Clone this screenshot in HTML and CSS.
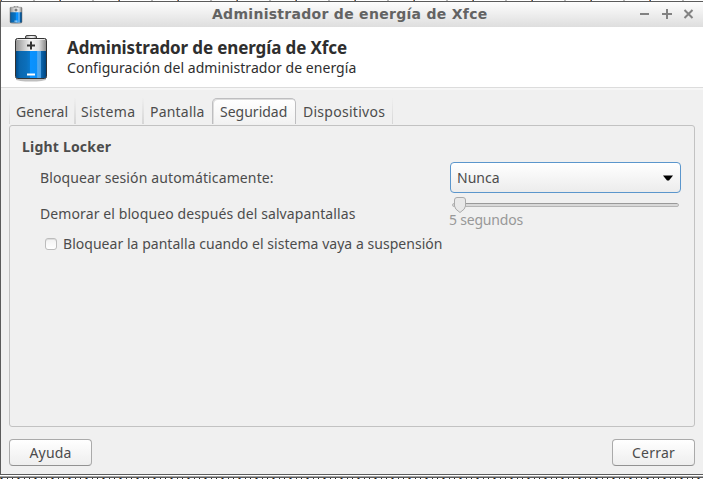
FILE: index.html
```
<!DOCTYPE html>
<html lang="es">
<head>
<meta charset="utf-8">
<title>Administrador de energía de Xfce</title>
<link rel="stylesheet" href="styles.css">
</head>
<body>
<svg width="0" height="0" class="defs" aria-hidden="true">
  <defs>
    <linearGradient id="cell"><stop offset="0" stop-color="#004a88"/><stop offset=".12" stop-color="#0a66ad"/><stop offset=".35" stop-color="#0b6fbb"/><stop offset=".46" stop-color="#0a78cc"/><stop offset=".48" stop-color="#0a92ff"/><stop offset=".7" stop-color="#0a90fa"/><stop offset=".72" stop-color="#55aaf0"/><stop offset=".83" stop-color="#4a9fe2"/><stop offset=".85" stop-color="#0b64ab"/><stop offset="1" stop-color="#004580"/></linearGradient>
    <linearGradient id="metal"><stop offset="0" stop-color="#929292"/><stop offset=".3" stop-color="#cfcfcf"/><stop offset=".5" stop-color="#f4f4f4"/><stop offset=".75" stop-color="#e0e0e0"/><stop offset="1" stop-color="#858585"/></linearGradient>
    <symbol id="battery" viewBox="0 0 34 47">
      <ellipse cx="17" cy="44.5" rx="15" ry="2" fill="#000" opacity=".25"/>
      <rect x="11.5" y=".5" width="11" height="5" rx="1.5" fill="url(#metal)" stroke="#444"/>
      <rect x="1.5" y="3.5" width="31" height="40" rx="2" fill="url(#metal)" stroke="#333"/>
      <path d="M2 16h30v26q0 1-1 1H3q-1 0-1-1z" fill="url(#cell)"/>
      <path d="M3 4.5h28" stroke="#fff" opacity=".7"/>
      <path d="M13 10.5h8M17 6.5v8" stroke="#333" stroke-width="2"/>
      <path d="M13 39.500h8" stroke="#fff" stroke-width="2"/>
    </symbol>
  </defs>
</svg>
<div class="behind behind-top"></div>
<div class="window">
  <header class="titlebar">
    <svg class="app-icon"><use href="#battery"/></svg>
    <div class="title"><span>Administrador de energía de Xfce</span></div>
    <svg class="controls" width="50" height="12" viewBox="0 0 50 12"><path d="M0 5h9M22 5h10M27 0v10" stroke="#828282" stroke-width="2" fill="none"/><path d="m44.500 1 8 8m0-8-8 8" stroke="#828282" stroke-width="2"/></svg>
  </header>
  <section class="heading">
    <svg class="big-icon"><use href="#battery"/></svg>
    <div class="heading-text">
      <h1>Administrador de energía de Xfce</h1>
      <p>Configuración del administrador de energía</p>
    </div>
  </section>
  <main>
    <nav class="tabs">
      <div class="tab general"><span>General</span></div>
      <div class="tab sistema"><span>Sistema</span></div>
      <div class="tab pantalla"><span>Pantalla</span></div>
      <div class="tab seguridad"><span>Seguridad</span></div>
      <div class="tab dispositivos"><span>Dispositivos</span></div>
    </nav>
    <section class="pane">
      <h2>Light Locker</h2>
      <div class="row lock-row">
        <span class="t-lock">Bloquear sesión automáticamente:</span>
        <div class="combo"><span>Nunca</span><svg width="10" height="6"><path d="M0 .5h10L6 5.500H4z" fill="#000"/></svg></div>
      </div>
      <div class="row delay-row">
        <span class="t-delay">Demorar el bloqueo después del salvapantallas</span>
        <div class="scale">
          <svg width="231" height="17" viewBox="0 0 231 17"><rect x="2.5" y="6.5" width="226" height="3" rx="1.5" fill="#d8d8d8" stroke="#b5b5b5"/><path d="M4 6.5h223" stroke="#999"/><path d="M4.500 3q0-2.500 2.500-2.500h6q2.500 0 2.500 2.500v6q0 3-5.500 6.500Q4.500 12 4.500 9z" fill="#e8e8e8" stroke="#aaa"/></svg>
          <span class="t-sec">5 segundos</span>
        </div>
      </div>
      <div class="row check-row"><i class="box"></i><span class="t-check">Bloquear la pantalla cuando el sistema vaya a suspensión</span></div>
    </section>
    <footer>
      <div class="button"><span class="t-help">Ayuda</span></div>
      <div class="button"><span class="t-close">Cerrar</span></div>
    </footer>
  </main>
</div>
<div class="frame-edge"></div>
<div class="behind behind-bottom"></div>
</body>
</html>
```
FILE: styles.css
```
* { box-sizing: border-box; }
body { margin: 0; width: 703px; height: 479px; overflow: hidden; background: #fff; color: #4c4c4c; font: 14px/20px "Noto Sans", sans-serif; white-space: nowrap; }
svg { display: block; flex: none; }
.defs { position: absolute; }
h1, h2, p { margin: 0; }
.behind { height: 1px; }
.behind-top { background: repeating-linear-gradient(90deg, #d38b48 0 1px, #345b91 1px 2px, #fff 2px 33px, #bbb 33px 35px, #fff 35px 59px); }
.behind-bottom { background: repeating-linear-gradient(90deg, #c48b45 0 1px, #222 1px 2px, #5c8ccf 2px 3px, #fff 3px 7px, #333 7px 8px, #fff 8px 12px, #222 12px 13px, #fff 13px 17px); }
.window { height: 474px; display: flex; flex-direction: column; border: 1px solid #5b5b5b; border-right: 0; background: #f0f0f0; }
.titlebar { height: 25px; flex: none; display: flex; align-items: center; background: linear-gradient(#fdfdfd, #dedede); }
.app-icon { width: 14px; height: 18px; margin-left: 8px; }
.title { flex: 1; padding-left: 189px; margin-top: -2px; font: bold 14px/20px "DejaVu Sans", sans-serif; letter-spacing: .29px; color: #636363; }
.controls { margin-right: 13px; overflow: visible; }
.heading { height: 63px; flex: none; display: flex; padding: 8px 0 0 13px; background: #fff; border-bottom: 2px solid #f6f6f6; box-shadow: inset 0 -1px #dcdcdc; color: #2e2e2e; }
.big-icon { width: 34px; height: 47px; }
.heading-text { padding: 3px 0 0 19px; }
h1 { font-size: 17px; line-height: 20px; letter-spacing: -.12px; }
p { letter-spacing: .05px; }
main { flex: 1; display: flex; flex-direction: column; padding: 8px 8px 0; }
.tabs { height: 27px; display: flex; }
.tab { padding: 4px 0 0 7px; border-right: 2px solid; border-image: linear-gradient(transparent, #d5d5d5) 1; height: 26px; }
.general { width: 67px; border-left: 1px solid; padding-left: 6px; letter-spacing: .08px; }
.sistema { width: 68px; padding-left: 5px; letter-spacing: .35px; }
.pantalla { width: 68px; border-right: 0; padding-left: 6px; letter-spacing: .2px; }
.seguridad { width: 84px; border: 1px solid #bebec0; border-bottom: 0; border-image: none; border-radius: 5px 5px 0 0; background: linear-gradient(#fff, #f2f2f2); padding-top: 3px; box-shadow: inset 1px 1px #ddd; }
.dispositivos { width: 97px; border-right-width: 1px; letter-spacing: .27px; }
.pane { width: 686px; height: 302px; border: 1px solid #c2c2c2; border-radius: 3px; padding: 11px 13px 0 12px; }
h2 { font-size: 14px; line-height: 20px; letter-spacing: .2px; }
.row { display: flex; }
.lock-row { padding: 5px 0 0 18px; justify-content: space-between; align-items: center; }
.t-lock { letter-spacing: .12px; }
.combo { width: 231px; height: 31px; display: flex; align-items: center; justify-content: space-between; padding: 0 7px 0 6px; border: 1px solid #5b96cc; border-radius: 4px; background: linear-gradient(#fff, #ececec); }
.delay-row { height: 40px; padding: 4px 0 0 18px; justify-content: space-between; }
.t-delay { padding-top: 7px; letter-spacing: .1px; }
.scale { width: 231px; color: #989898; }
.t-sec { display: block; margin: -4px 0 0 -1px; letter-spacing: -.2px; }
.check-row { align-items: center; padding: 1px 0 0 23px; }
.t-check { letter-spacing: .035px; }
.box { width: 12px; height: 12px; margin: -1px 6px 0 0; border: 1px solid #bcbcbc; border-radius: 3px; background: linear-gradient(#f2f2f2, #fff); box-shadow: inset 0 1px #ddd; }
footer { display: flex; justify-content: space-between; width: 686px; padding-top: 12px; }
.button { width: 83px; height: 27px; display: flex; align-items: center; justify-content: center; border: 1px solid #aaa; border-bottom-color: #929292; border-radius: 4px; background: linear-gradient(#fff, #eee); }
.t-help { letter-spacing: .2px; }
.t-close { letter-spacing: .2px; }
.frame-edge { height: 3px; background: linear-gradient(#fff 0 1px, #a5a5a5 1px 2px, #5b5b5b 2px 3px); }
```
